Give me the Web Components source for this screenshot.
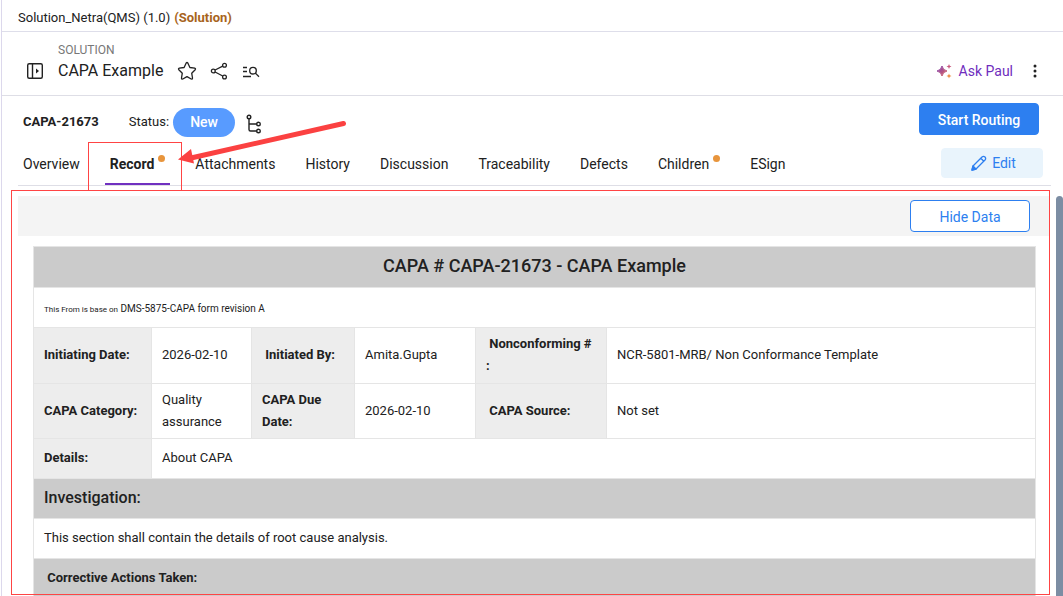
<!DOCTYPE html>
<html lang="en">
<head>
<meta charset="utf-8">
<title>CAPA Example</title>
<style>
    html, body {
        height: 100%;
    }
    body {
        margin: 0;
        overflow: hidden;
        background: #fff;
        color: #212121;
        font: 14px/20px Roboto, "Liberation Sans", sans-serif;
    }
</style>
</head>
<body>

<app-shell>
    <top-bar slot="top" name="Solution_Netra(QMS) (1.0)" kind="(Solution)"></top-bar>
    <page-header slot="header" kicker="SOLUTION" heading="CAPA Example"></page-header>
    <record-bar slot="bar" record="CAPA-21673" status="New"></record-bar>
    <record-tabs slot="tabs">
        <record-tab>Overview</record-tab>
        <record-tab active marked>Record</record-tab>
        <record-tab>Attachments</record-tab>
        <record-tab>History</record-tab>
        <record-tab>Discussion</record-tab>
        <record-tab>Traceability</record-tab>
        <record-tab>Defects</record-tab>
        <record-tab marked>Children</record-tab>
        <record-tab>ESign</record-tab>
        <app-button slot="action" variant="soft">
            <svg slot="icon" width="16" height="16" viewBox="0 0 16 16" fill="none" stroke="#2d7ff0" stroke-width="1.300" stroke-linejoin="round">
                <path d="M2 11 L11 2 Q12.500 .8 14 2 Q15.300 3.500 14 5 L5 14 L1 15 Z M9.800 3.200 L12.800 6.200"/>
                <path d="M2 11 L5 14 L1 15 Z" fill="#2d7ff0"/>
            </svg>
            Edit
        </app-button>
    </record-tabs>
    <record-panel slot="panel">
        <app-button slot="tools" variant="outline">Hide Data</app-button>
        <capa-form></capa-form>
    </record-panel>
    <arrow-mark slot="marks"></arrow-mark>
</app-shell>

<script>
    // app-shell : the page column and the red arrow over it
    class AppShell extends HTMLElement {
        constructor() {
            super();
            this.attachShadow({ mode: 'open' });
        }

        connectedCallback() {
            this.shadowRoot.innerHTML = `
            <style>
                :host {
                    display: flex;
                    flex-direction: column;
                    position: relative;
                    height: 100%;
                    box-sizing: border-box;
                    margin-left: 1px;
                    border-left: 1px solid #dcd8ec;
                }
            </style>
            <slot name="top"></slot>
            <slot name="header"></slot>
            <slot name="bar"></slot>
            <slot name="tabs"></slot>
            <slot name="panel"></slot>
            <slot name="marks"></slot>
            `;
        }
    }

    class TopBar extends HTMLElement {
        constructor() {
            super();
            this.attachShadow({ mode: 'open' });
        }

        connectedCallback() {
            const name = this.getAttribute('name');
            const kind = this.getAttribute('kind');

            this.shadowRoot.innerHTML = `
            <style>
                :host {
                    display: flex;
                    gap: 4px;
                    padding: 8px 16px 3px;
                    border-bottom: 1px solid #dedeea;
                    font-size: 13px;
                }
                b {
                    color: #a8641c;
                    font-weight: 700;
                }
            </style>
            <span>${name}</span>
            <b>${kind}</b>
            `;
        }
    }

    class PageHeader extends HTMLElement {
        constructor() {
            super();
            this.attachShadow({ mode: 'open' });
        }

        connectedCallback() {
            const kicker = this.getAttribute('kicker');
            const heading = this.getAttribute('heading');

            this.shadowRoot.innerHTML = `
            <style>
                :host {
                    display: flex;
                    align-items: flex-end;
                    box-sizing: border-box;
                    height: 64px;
                    padding: 0 22px 13px 24px;
                    border-bottom: 1px solid #dedee6;
                }
                .title {
                    flex: 1;
                    padding-left: 14px;
                }
                small {
                    display: block;
                    color: #777;
                    font-size: 12px;
                    line-height: 20px;
                }
                .line {
                    display: flex;
                    align-items: center;
                    gap: 12px;
                    height: 22px;
                }
                h1 {
                    margin: 0 1px 0 0;
                    font-size: 16px;
                    font-weight: 400;
                    line-height: 22px;
                }
                button {
                    display: flex;
                    align-items: center;
                    justify-content: center;
                    gap: 7px;
                    height: 22px;
                    padding: 0;
                    border: 0;
                    background: none;
                    color: #6f2dbd;
                    font: inherit;
                }
                svg {
                    display: block;
                }
                .more {
                    margin-left: 16px;
                }
            </style>
            <button aria-label="Open side panel">
                <svg width="18" height="18" viewBox="0 0 18 18" fill="none" stroke="#222" stroke-width="1.400">
                    <rect x="1.700" y="1.700" width="14.600" height="14.600" rx="1.500"/>
                    <path d="M6.500 2 V16"/>
                    <path d="M10 6.500 L13 9 L10 11.500 Z" fill="#222" stroke="none"/>
                </svg>
            </button>
            <div class="title">
                <small>${kicker}</small>
                <div class="line">
                    <h1>${heading}</h1>
                    <button aria-label="Favourite">
                        <svg width="22" height="20" viewBox="0 0 22 20" fill="none" stroke="#222" stroke-width="1.300" stroke-linejoin="round">
                            <path d="M10.200 2 Q11 1 11.800 2 L13.900 6.500 L18.700 7.200 Q20 7.700 19.200 8.700 L15.700 12.200 L16.500 17 Q16.500 18.400 15.200 18 L11 15.600 L6.800 18 Q5.500 18.400 5.500 17 L6.300 12.200 L2.800 8.700 Q2 7.700 3.300 7.200 L8.100 6.500 Z"/>
                        </svg>
                    </button>
                    <button aria-label="Share">
                        <svg width="18" height="18" viewBox="0 0 18 18" fill="none" stroke="#222" stroke-width="1.300">
                            <circle cx="14.500" cy="3.300" r="1.900"/>
                            <circle cx="3.300" cy="9" r="1.900"/>
                            <circle cx="14.500" cy="15" r="1.900"/>
                            <path d="M5.100 8 L12.700 4.200 M5.100 10 L12.700 14"/>
                        </svg>
                    </button>
                    <button aria-label="Search in record">
                        <svg width="20" height="18" viewBox="0 0 20 18" fill="none" stroke="#222" stroke-width="1.300">
                            <path d="M3 5.500 H7 M3 9.500 H7 M3 14.500 H11"/>
                            <circle cx="13" cy="8.700" r="3.300"/>
                            <path d="M15.400 11.100 L19 14.700"/>
                        </svg>
                    </button>
                </div>
            </div>
            <button>
                <svg width="16" height="16" viewBox="0 0 16 16">
                    <defs>
                        <linearGradient id="spark" x1="0" y1="0" x2="1" y2="1">
                            <stop offset="0" stop-color="#7b3fb8"/>
                            <stop offset="1" stop-color="#e0655a"/>
                        </linearGradient>
                    </defs>
                    <path d="M6 3 Q6.800 7.200 11 8 Q6.800 8.800 6 13 Q5.200 8.800 1 8 Q5.200 7.200 6 3 Z" fill="url(#spark)" stroke="url(#spark)"/>
                    <path d="M13 1 L13.700 2.800 L15.500 3.500 L13.700 4.200 L13 6 L12.300 4.200 L10.500 3.500 L12.300 2.800 Z" fill="#c9587c"/>
                    <path d="M13 10.500 L13.700 12.300 L15.500 13 L13.700 13.700 L13 15.500 L12.300 13.700 L10.500 13 L12.300 12.300 Z" fill="#ec8a3c"/>
                </svg>
                Ask Paul
            </button>
            <button class="more" aria-label="More">
                <svg width="12" height="16" viewBox="0 0 12 16" fill="#222">
                    <circle cx="6" cy="3" r="1.500"/>
                    <circle cx="6" cy="8" r="1.500"/>
                    <circle cx="6" cy="13" r="1.500"/>
                </svg>
            </button>
            `;
        }
    }

    class AppButton extends HTMLElement {
        constructor() {
            super();
            this.attachShadow({ mode: 'open' });
        }

        connectedCallback() {
            this.shadowRoot.innerHTML = `
            <style>
                :host {
                    display: block;
                }
                button {
                    display: flex;
                    align-items: center;
                    justify-content: center;
                    gap: 5px;
                    box-sizing: border-box;
                    width: 120px;
                    height: 32px;
                    padding: 2px 0 0;
                    border: 1px solid #2d7ff0;
                    border-radius: 4px;
                    background: #2d7ff0;
                    color: #fff;
                    font: 500 14px/20px Roboto, "Liberation Sans", sans-serif;
                }
                :host([variant=outline]) button {
                    background: #fff;
                    color: #2d7ff0;
                    font-weight: 400;
                }
                :host([variant=soft]) button {
                    width: 102px;
                    height: 30px;
                    padding: 0 0 0 3px;
                    border-color: #e9f4fc;
                    background: #e9f4fc;
                    color: #2d7ff0;
                    font-weight: 400;
                }
            </style>
            <button><slot name="icon"></slot><span><slot></slot></span></button>
            `;
        }
    }

    class RecordBar extends HTMLElement {
        constructor() {
            super();
            this.attachShadow({ mode: 'open' });
        }

        connectedCallback() {
            const record = this.getAttribute('record');
            const status = this.getAttribute('status');

            this.shadowRoot.innerHTML = `
            <style>
                :host {
                    display: flex;
                    align-items: center;
                    height: 46px;
                    padding: 0 24px 0 21px;
                    font-size: 13px;
                }
                b {
                    margin-right: 30px;
                    font-weight: 700;
                }
                .pill {
                    margin: 6px 10px 0 4px;
                    width: 62px;
                    border-radius: 15px;
                    background: #589bff;
                    color: #fff;
                    font-size: 14px;
                    font-weight: 500;
                    line-height: 29px;
                    text-align: center;
                }
                b, .label {
                    padding-top: 5px;
                }
                svg {
                    margin-top: 9px;
                }
                app-button {
                    margin-left: auto;
                }
            </style>
            <b>${record}</b>
            <span class="label">Status:</span>
            <span class="pill">${status}</span>
            <svg width="20" height="20" viewBox="0 0 20 20" fill="none" stroke="#222" stroke-width="1.400">
                <circle cx="4" cy="3" r="1.800"/>
                <circle cx="13.500" cy="10" r="1.800"/>
                <circle cx="13.500" cy="17" r="1.800"/>
                <path d="M4 5 V15.500 Q4 17 5.500 17 H11.500 M4 10 H11.500"/>
            </svg>
            <app-button>Start Routing</app-button>
            `;
        }
    }

    class RecordTabs extends HTMLElement {
        constructor() {
            super();
            this.attachShadow({ mode: 'open' });
        }

        connectedCallback() {
            this.shadowRoot.innerHTML = `
            <style>
                :host {
                    display: flex;
                    box-sizing: border-box;
                    height: 44px;
                    margin: 0 12px 0 16px;
                    border-bottom: 1px solid #dedee6;
                }
                nav {
                    display: flex;
                    flex: 1;
                    gap: 20px;
                }
                .action {
                    padding: 6px 8px 0 0;
                }
            </style>
            <nav><slot></slot></nav>
            <div class="action"><slot name="action"></slot></div>
            `;
        }
    }

    class RecordTab extends HTMLElement {
        constructor() {
            super();
            this.attachShadow({ mode: 'open' });
        }

        connectedCallback() {
            this.shadowRoot.innerHTML = `
            <style>
                :host {
                    display: flex;
                    position: relative;
                }
                a {
                    display: flex;
                    gap: 4px;
                    box-sizing: border-box;
                    padding: 12px 5px 0;
                    border-bottom: 2px solid transparent;
                    color: inherit;
                    text-decoration: none;
                }
                :host([active]) a {
                    border-color: #7030c0;
                    font-weight: 700;
                }
                i {
                    display: none;
                    width: 7px;
                    height: 7px;
                    margin-top: 1px;
                    border-radius: 50%;
                    background: #e8953c;
                }
                :host([marked]) i {
                    display: block;
                }
                /* red box round the open tab */
                .box {
                    display: none;
                    position: absolute;
                    inset: 0 -12px -6px -17px;
                    border: 1px solid #f44;
                    pointer-events: none;
                }
                :host([active]) .box {
                    display: block;
                }
            </style>
            <a href="#"><span><slot></slot></span><i></i></a>
            <div class="box"></div>
            `;
        }
    }

    class RecordPanel extends HTMLElement {
        constructor() {
            super();
            this.attachShadow({ mode: 'open' });
        }

        connectedCallback() {
            this.shadowRoot.innerHTML = `
            <style>
                :host {
                    display: flex;
                    flex: 1;
                    position: relative;
                    min-height: 0;
                    overflow: hidden;
                    padding-left: 16px;
                }
                .scroll {
                    flex: 1;
                    margin-top: 10px;
                    overflow: hidden;
                }
                .tools {
                    display: flex;
                    justify-content: flex-end;
                    padding: 4px 20px;
                    background: #f4f4f4;
                }
                .body {
                    padding: 10px 14px 0 15px;
                }
                .thumb {
                    width: 7px;
                    margin: 10px 0 0 6px;
                    border-radius: 4px 4px 0 0;
                    background: #7c8da3;
                }
                .frame {
                    position: absolute;
                    inset: 4px 13px 1px 9px;
                    border: 1px solid #f44;
                    pointer-events: none;
                }
            </style>
            <div class="scroll">
                <div class="tools"><slot name="tools"></slot></div>
                <div class="body"><slot></slot></div>
            </div>
            <div class="thumb"></div>
            <div class="frame"></div>
            `;
        }
    }

    class CapaForm extends HTMLElement {
        constructor() {
            super();
            this.attachShadow({ mode: 'open' });
        }

        connectedCallback() {
            this.shadowRoot.innerHTML = `
            <style>
                :host {
                    display: block;
                }
                table {
                    width: 100%;
                    table-layout: fixed;
                    border-collapse: collapse;
                    font-size: 13px;
                    line-height: 22px;
                }
                th, td {
                    box-sizing: border-box;
                    height: 40px;
                    padding: 4px 10px 6px;
                    border: 1px solid #e5e5e5;
                    text-align: left;
                }
                th {
                    background: #ededed;
                    font-weight: 700;
                }
                .band th {
                    background: #cbcbcb;
                }
                .first th, .first td {
                    height: 56px;
                }
                .even th, .even td {
                    padding: 5px 10px;
                }
                th.title {
                    height: 41px;
                    font-size: 18px;
                    font-weight: 500;
                    text-align: center;
                }
                th.section {
                    font-size: 16px;
                    font-weight: 500;
                }
                td.note {
                    padding: 8px 10px 5px;
                    font-size: 10px;
                }
                .note small {
                    font-size: 8px;
                }
            </style>
            <table>
                <colgroup>
                    <col style="width: 118px">
                    <col style="width: 100px">
                    <col style="width: 103px">
                    <col style="width: 121px">
                    <col style="width: 131px">
                    <col>
                </colgroup>
                <tr class="band"><th class="title" colspan="6">CAPA # CAPA-21673 - CAPA Example</th></tr>
                <tr><td class="note" colspan="6"><small>This From is base on</small> DMS-5875-CAPA form revision A</td></tr>
                <tr class="first">
                    <th>Initiating Date:</th><td>2026-02-10</td>
                    <th>&nbsp;Initiated By:</th><td>Amita.Gupta</td>
                    <th>&nbsp;Nonconforming #<br>:</th><td>NCR-5801-MRB/ Non Conformance Template</td>
                </tr>
                <tr class="even">
                    <th>CAPA Category:</th><td>Quality assurance</td>
                    <th>CAPA Due Date:</th><td>2026-02-10</td>
                    <th>&nbsp;CAPA Source:</th><td>Not set</td>
                </tr>
                <tr><th>Details:</th><td colspan="5">About CAPA</td></tr>
                <tr class="band"><th class="section" colspan="6">Investigation:</th></tr>
                <tr><td colspan="6">This section shall contain the details of root cause analysis.</td></tr>
                <tr class="band"><th colspan="6">&nbsp;Corrective Actions Taken:</th></tr>
            </table>
            `;
        }
    }

    // red arrow that points at the Record tab
    class ArrowMark extends HTMLElement {
        constructor() {
            super();
            this.attachShadow({ mode: 'open' });
        }

        connectedCallback() {
            this.shadowRoot.innerHTML = `
            <style>
                :host {
                    position: absolute;
                    left: 174px;
                    top: 118px;
                    pointer-events: none;
                }
                svg {
                    display: block;
                }
            </style>
            <svg width="174" height="54" viewBox="0 0 174 54">
                <path d="M167.500 5.500 L15 40" stroke="#fb4141" stroke-width="5" stroke-linecap="round"/>
                <path d="M2 41.500 L15 31 L18 45.500 Z" fill="#fb4141"/>
            </svg>
            `;
        }
    }

    customElements.define('app-shell', AppShell);
    customElements.define('top-bar', TopBar);
    customElements.define('page-header', PageHeader);
    customElements.define('app-button', AppButton);
    customElements.define('record-bar', RecordBar);
    customElements.define('record-tabs', RecordTabs);
    customElements.define('record-tab', RecordTab);
    customElements.define('record-panel', RecordPanel);
    customElements.define('capa-form', CapaForm);
    customElements.define('arrow-mark', ArrowMark);
</script>
</body>
</html>
